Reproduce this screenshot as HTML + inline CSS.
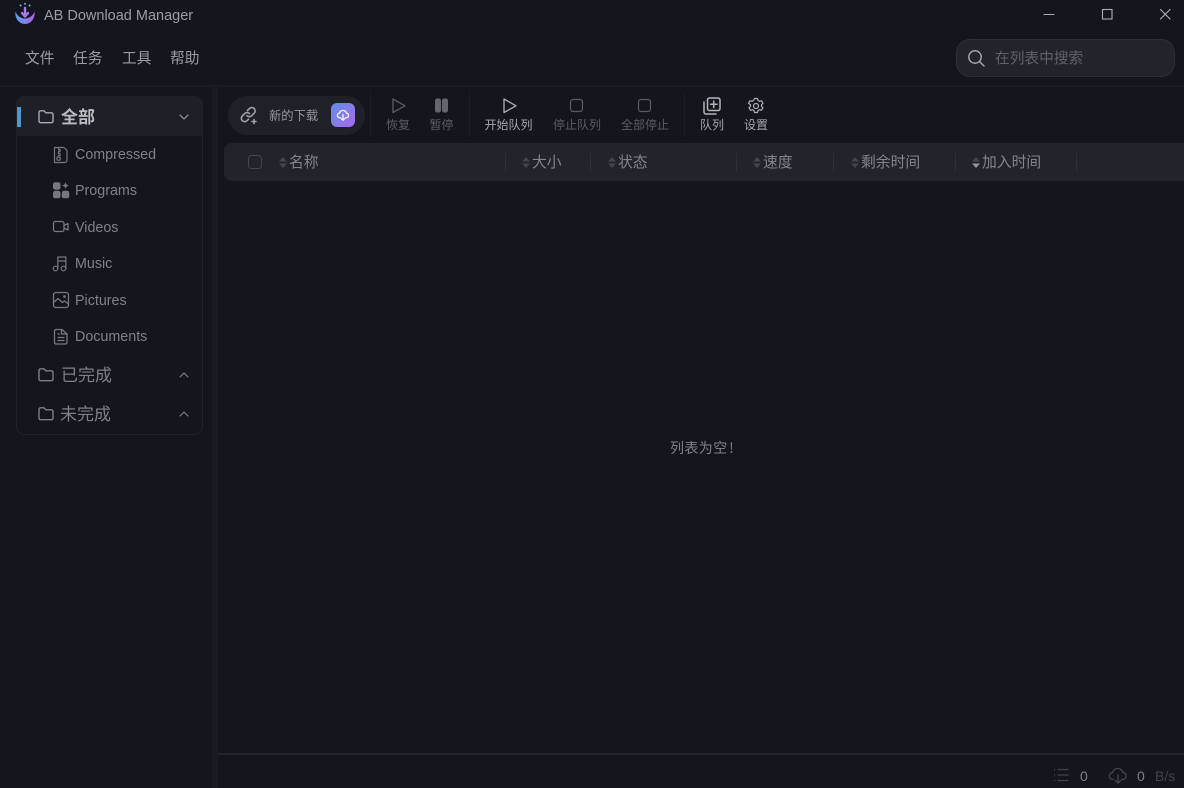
<!DOCTYPE html>
<html><head><meta charset="utf-8"><style>
*{box-sizing:border-box}
html,body{margin:0;padding:0;width:1184px;height:788px;overflow:hidden;background:#15161d}
body{position:relative;font-family:"Liberation Sans","Noto Sans CJK SC",sans-serif;color:#a8a9ae}
.a{position:absolute;white-space:nowrap;line-height:1}
svg.a{fill:none;stroke-linecap:round;stroke-linejoin:round}
.b{position:absolute}
.cn{font-family:"Noto Sans CJK SC",sans-serif}
.c{font-size:14.3px;color:#808186}
.t{font-size:12px;transform:translateX(-50%)}
.h{font-size:14.8px;color:#84858a;font-family:"Noto Sans CJK SC",sans-serif}
.sep{position:absolute;top:153px;width:1px;height:19px;background:#2f3037}
</style></head><body>

<!-- structure -->
<div class="b" style="left:0;top:85px;width:1184px;height:2px;background:#1c1d24"></div>
<div class="b" style="left:212px;top:87px;width:6px;height:701px;background:#1a1b22"></div>
<div class="b" style="left:218px;top:753px;width:966px;height:2px;background:#23242b"></div>

<!-- logo -->
<svg class="a" style="left:14px;top:2px" width="22" height="23" viewBox="0 0 22 23">
<defs><linearGradient id="g" x1="0" y1="0" x2="1" y2="0"><stop offset="0" stop-color="#4fa3e8"/><stop offset="1" stop-color="#b45ff0"/></linearGradient></defs>
<path d="M1.500 9.500C.5 16 5 22 11 22s10.500-6 9.500-12.500C19.500 13 15.500 16.500 11 16.500S2.500 13 1.500 9.500Z" fill="url(#g)"/>
<path d="M11 6v8.500M8 11l3 3.500 3-3.500" stroke="#a978ee" stroke-width="2.400"/>
<path d="M6.500 3.500h.1M11 1.800h.1M15.500 3.500h.1" stroke="#7fb0ee" stroke-width="1.900"/>
</svg>
<div class="a" style="left:44px;top:9px;font-size:14.5px;color:#9d9ea3">AB Download Manager</div>

<!-- window controls -->
<svg class="a" style="left:1040px;top:6px" width="136" height="16" viewBox="0 0 136 16" stroke="#aeafb3" stroke-width="1.100">
<path d="M4 8.500H14"/>
<rect x="62.500" y="3.500" width="9.500" height="9.500" stroke-linejoin="miter"/>
<path d="M120.500 3.500l9.500 9.500M130 3.500l-9.500 9.500"/>
</svg>

<!-- menu -->
<div class="a cn" style="left:25px;top:51px;font-size:14.700px;color:#9b9ca1">文件</div>
<div class="a cn" style="left:73px;top:51px;font-size:14.700px;color:#9b9ca1">任务</div>
<div class="a cn" style="left:122px;top:51px;font-size:14.700px;color:#9b9ca1">工具</div>
<div class="a cn" style="left:170px;top:51px;font-size:14.700px;color:#9b9ca1">帮助</div>

<!-- search -->
<div class="b" style="left:956px;top:39px;width:219px;height:38px;border-radius:14px;background:#22232b;border:1px solid #2e2f37"></div>
<svg class="a" style="left:966px;top:48px" width="20" height="20" viewBox="0 0 20 20" stroke="#a4a5a9" stroke-width="1.500"><circle cx="9" cy="9" r="6.200"/><path d="M13.500 13.500L18 18"/></svg>
<div class="a cn" style="left:995px;top:51px;font-size:14.700px;color:#616268">在列表中搜索</div>

<!-- sidebar -->
<div class="b" style="left:16px;top:96px;width:187px;height:339px;border:1px solid #212229;border-radius:8px"></div>
<div class="b" style="left:16px;top:96px;width:187px;height:40px;background:#1e1f27;border-radius:8px 8px 0 0"></div>
<div class="b" style="left:17px;top:107px;width:4px;height:20px;background:#4a9acb"></div>
<svg width="0" height="0" style="position:absolute"><defs>
<symbol id="folder" viewBox="0 0 18 18"><path d="M2 4.500c0-1 .7-1.700 1.700-1.700H7l1.800 2h5.500c1 0 1.700.7 1.700 1.700v6.500c0 1-.7 1.700-1.700 1.700H3.700C2.700 14.700 2 14 2 13Z"/></symbol>
</defs></svg>
<svg class="a" style="left:37px;top:108px" width="18" height="18" stroke="#aaabaf" stroke-width="1.400"><use href="#folder"/></svg>
<div class="a cn" style="left:61px;top:107px;font-size:17px;font-weight:700;color:#bbbcc0">全部</div>
<svg class="a" style="left:178px;top:111px" width="12" height="12" viewBox="0 0 12 12" stroke="#98999e" stroke-width="1.200"><path d="M2 4l4 4 4-4"/></svg>

<svg class="a" style="left:52px;top:146px" width="18" height="18" viewBox="0 0 18 18" stroke="#77787d" stroke-width="1.200"><path d="M2.500 1.500h9.500l3 3V14a2.500 2.500 0 0 1-2.500 2.500H2.500Z"/><path d="M6.500 1.500v2h1.500v2H6.500v2H8v2H6.500"/><rect x="5" y="11" width="3.200" height="3.200" rx="1"/></svg>
<div class="a c" style="left:75px;top:148px">Compressed</div>
<svg class="a" style="left:52px;top:181px" width="18" height="18" viewBox="0 0 18 18"><rect x="1" y="1.200" width="7.500" height="7.500" rx="2.200" fill="#77787d"/><rect x="1" y="9.800" width="7.500" height="7.500" rx="2.200" fill="#77787d"/><rect x="9.800" y="9.800" width="7.500" height="7.500" rx="2.200" fill="#77787d"/><path d="M13.500 .8c.4 2.500 1.300 3.400 3.800 3.800-2.500.4-3.400 1.300-3.800 3.800-.4-2.500-1.300-3.400-3.800-3.800 2.500-.4 3.400-1.300 3.800-3.800Z" fill="#77787d"/></svg>
<div class="a c" style="left:75px;top:184px">Programs</div>
<svg class="a" style="left:52px;top:219px" width="18" height="16" viewBox="0 0 18 16" stroke="#77787d" stroke-width="1.300"><rect x="1.500" y="2.500" width="10.500" height="10" rx="2"/><path d="M12 6.500l4-2v6.500l-4-2"/></svg>
<div class="a c" style="left:75px;top:221px">Videos</div>
<svg class="a" style="left:52px;top:255px" width="16" height="18" viewBox="0 0 16 18" stroke="#77787d" stroke-width="1.200"><circle cx="3.500" cy="13.500" r="2.300"/><circle cx="11.500" cy="13.500" r="2.300"/><path d="M5.800 13.500V2h8v11.500M5.800 6h8"/></svg>
<div class="a c" style="left:75px;top:257px">Music</div>
<svg class="a" style="left:52px;top:291px" width="18" height="18" viewBox="0 0 18 18" stroke="#77787d" stroke-width="1.300"><rect x="1.500" y="1.500" width="15" height="15" rx="2.500"/><path d="M1.500 11.500L6 7.500l4.500 4 2-1.500 4 3"/><circle cx="12.500" cy="5.500" r=".7"/></svg>
<div class="a c" style="left:75px;top:294px">Pictures</div>
<svg class="a" style="left:52px;top:328px" width="18" height="18" viewBox="0 0 18 18" stroke="#77787d" stroke-width="1.300"><path d="M2.500 3A1.500 1.500 0 0 1 4 1.500h6L15 6v8.500A1.500 1.500 0 0 1 13.500 16H4a1.500 1.500 0 0 1-1.500-1.500Z"/><path d="M9.500 1.700V6H15M6 6h1.500M6 9.500h6M6 12.500h6"/></svg>
<div class="a c" style="left:75px;top:330px">Documents</div>

<svg class="a" style="left:37px;top:366px" width="18" height="18" stroke="#7e7f84" stroke-width="1.400"><use href="#folder"/></svg>
<div class="a cn" style="left:61px;top:365px;font-size:17px;color:#7e7f84">已完成</div>
<svg class="a" style="left:178px;top:369px" width="12" height="12" viewBox="0 0 12 12" stroke="#7e7f84" stroke-width="1.200"><path d="M2 8l4-4 4 4"/></svg>
<svg class="a" style="left:37px;top:405px" width="18" height="18" stroke="#7e7f84" stroke-width="1.400"><use href="#folder"/></svg>
<div class="a cn" style="left:60px;top:404px;font-size:17px;color:#7e7f84">未完成</div>
<svg class="a" style="left:178px;top:408px" width="12" height="12" viewBox="0 0 12 12" stroke="#7e7f84" stroke-width="1.200"><path d="M2 8l4-4 4 4"/></svg>

<!-- new download -->
<div class="b" style="left:228px;top:96px;width:137px;height:39px;border-radius:19px;background:#1f2028"></div>
<svg class="a" style="left:239px;top:105px" width="20" height="20" viewBox="0 0 20 20" stroke="#a0a1a6" stroke-width="1.600"><path d="M8.500 5.500l2-2a3.300 3.300 0 0 1 4.700 4.700l-2.500 2.500a3.300 3.300 0 0 1-4.700 0"/><path d="M10.500 8.500a3.300 3.300 0 0 0-4.700 0l-2.500 2.500a3.300 3.300 0 0 0 4.700 4.700l1.500-1.500"/><path d="M15 14.500v4M13 16.500h4"/></svg>
<div class="a cn" style="left:269px;top:109px;font-size:12.300px;color:#97989d">新的下载</div>
<div class="b" style="left:331px;top:103px;width:24px;height:24px;border-radius:6px;background:linear-gradient(135deg,#5f8fe8,#a86ae6)"></div>
<svg class="a" style="left:336px;top:108px" width="14" height="14" viewBox="0 0 18 18" stroke="#f0eefc" stroke-width="1.800"><path d="M5.500 12.500H5a3 3 0 0 1-.4-6 4.500 4.500 0 0 1 8.700 0 3 3 0 0 1-.4 6h-.4"/><path d="M9 8.500v7M6.800 13.500L9 15.700l2.200-2.200"/></svg>

<!-- toolbar -->
<div class="b" style="left:370px;top:91px;width:1px;height:46px;background:#1d1e25"></div>
<div class="b" style="left:469px;top:91px;width:1px;height:46px;background:#1d1e25"></div>
<div class="b" style="left:684px;top:91px;width:1px;height:46px;background:#1d1e25"></div>

<svg class="a" style="left:390px;top:97px" width="18" height="18" viewBox="0 0 18 18" stroke="#5b5c62" stroke-width="1.300"><path d="M3 2v13.500L15 8.800Z"/></svg>
<div class="a t cn" style="left:398px;top:119px;color:#5b5c62">恢复</div>
<svg class="a" style="left:434px;top:98px" width="15" height="15" viewBox="0 0 15 15"><rect x="1" y=".5" width="6" height="14" rx="2.200" fill="#66676d"/><rect x="8" y=".5" width="6" height="14" rx="2.200" fill="#66676d"/></svg>
<div class="a t cn" style="left:441.500px;top:119px;color:#5b5c62">暂停</div>
<svg class="a" style="left:501px;top:97px" width="18" height="18" viewBox="0 0 18 18" stroke="#aeafb3" stroke-width="1.300"><path d="M3 2v13.500L15 8.800Z"/></svg>
<div class="a t cn" style="left:508.500px;top:119px;color:#a5a6aa">开始队列</div>
<svg class="a" style="left:569px;top:98px" width="15" height="15" viewBox="0 0 15 15" stroke="#5b5c62" stroke-width="1.200"><rect x="1.500" y="1.500" width="12" height="12" rx="2.500"/></svg>
<div class="a t cn" style="left:577px;top:119px;color:#5b5c62">停止队列</div>
<svg class="a" style="left:637px;top:98px" width="15" height="15" viewBox="0 0 15 15" stroke="#5b5c62" stroke-width="1.200"><rect x="1.500" y="1.500" width="12" height="12" rx="2.500"/></svg>
<div class="a t cn" style="left:645px;top:119px;color:#5b5c62">全部停止</div>
<svg class="a" style="left:703px;top:97px" width="18" height="18" viewBox="0 0 18 18" stroke="#b4b5b9" stroke-width="1.500"><rect x="4.500" y="1" width="12.500" height="12.500" rx="2"/><path d="M10.700 4v6.500M7.500 7.200H14M1 5v10a2 2 0 0 0 2 2h10"/></svg>
<div class="a t cn" style="left:712px;top:119px;color:#a5a6aa">队列</div>
<svg class="a" style="left:747px;top:97px" width="18" height="18" viewBox="0 0 18 18" stroke="#aeafb3" stroke-width="1.200"><path d="M7.500 1.500h3l.5 2 1.500.8 2-.6 1.500 2.600-1.500 1.400v1.600l1.500 1.400-1.500 2.600-2-.6-1.500.8-.5 2h-3l-.5-2-1.500-.8-2 .6-1.500-2.600 1.500-1.400V7.700L1.500 6.300 3 3.700l2 .6 1.500-.8Z"/><circle cx="9" cy="9" r="2.500"/></svg>
<div class="a t cn" style="left:756px;top:119px;color:#a5a6aa">设置</div>

<!-- table header -->
<div class="b" style="left:224px;top:143px;width:960px;height:38px;background:#22232b;border-radius:8px 0 0 8px"></div>
<div class="b" style="left:248px;top:155px;width:14px;height:14px;border:1.500px solid #45464d;border-radius:3.500px"></div>

<svg class="a" style="left:279px;top:157px" width="8" height="11" viewBox="0 0 8 11"><path d="M4 0L8 4.500H0ZM4 11L0 6.500h8Z" fill="#44454c"/></svg>
<div class="a h" style="left:289px;top:155px">名称</div>
<div class="sep" style="left:505px"></div>
<svg class="a" style="left:522px;top:157px" width="8" height="11" viewBox="0 0 8 11"><path d="M4 0L8 4.500H0ZM4 11L0 6.500h8Z" fill="#44454c"/></svg>
<div class="a h" style="left:532px;top:155px">大小</div>
<div class="sep" style="left:590px"></div>
<svg class="a" style="left:608px;top:157px" width="8" height="11" viewBox="0 0 8 11"><path d="M4 0L8 4.500H0ZM4 11L0 6.500h8Z" fill="#44454c"/></svg>
<div class="a h" style="left:618px;top:155px">状态</div>
<div class="sep" style="left:736px"></div>
<svg class="a" style="left:753px;top:157px" width="8" height="11" viewBox="0 0 8 11"><path d="M4 0L8 4.500H0ZM4 11L0 6.500h8Z" fill="#44454c"/></svg>
<div class="a h" style="left:763px;top:155px">速度</div>
<div class="sep" style="left:833px"></div>
<svg class="a" style="left:851px;top:157px" width="8" height="11" viewBox="0 0 8 11"><path d="M4 0L8 4.500H0ZM4 11L0 6.500h8Z" fill="#44454c"/></svg>
<div class="a h" style="left:861px;top:155px">剩余时间</div>
<div class="sep" style="left:955px"></div>
<svg class="a" style="left:972px;top:157px" width="8" height="11" viewBox="0 0 8 11"><path d="M4 0L8 4.500H0Z" fill="#44454c"/><path d="M4 11L0 6.500h8Z" fill="#96979c"/></svg>
<div class="a h" style="left:982px;top:155px">加入时间</div>
<div class="sep" style="left:1076px"></div>

<!-- empty -->
<div class="a cn" style="left:670px;top:441px;font-size:14px;letter-spacing:.4px;color:#808186">列表为空<span style="margin-left:1.500px">!</span></div>

<!-- status -->
<svg class="a" style="left:1053px;top:768px" width="16" height="14" viewBox="0 0 16 14" stroke="#42434a" stroke-width="1.300"><path d="M5 1.500h10M5 7h10M5 12.500h10M1.500 1.500h.1M1.500 7h.1M1.500 12.500h.1"/></svg>
<div class="a" style="left:1080px;top:769px;font-size:14px;color:#808186">0</div>
<svg class="a" style="left:1108px;top:767px" width="20" height="18" viewBox="0 0 20 18" stroke="#42434a" stroke-width="1.400"><path d="M5.500 12.500H5a3.500 3.500 0 0 1-.4-7 5.300 5.300 0 0 1 10.300 0 3.500 3.500 0 0 1-.4 7H14"/><path d="M10 8v8M7.500 13.500L10 16l2.500-2.500"/></svg>
<div class="a" style="left:1137px;top:769px;font-size:14px;color:#808186">0</div>
<div class="a" style="left:1155px;top:769px;font-size:14px;color:#42434a">B/s</div>

</body></html>
